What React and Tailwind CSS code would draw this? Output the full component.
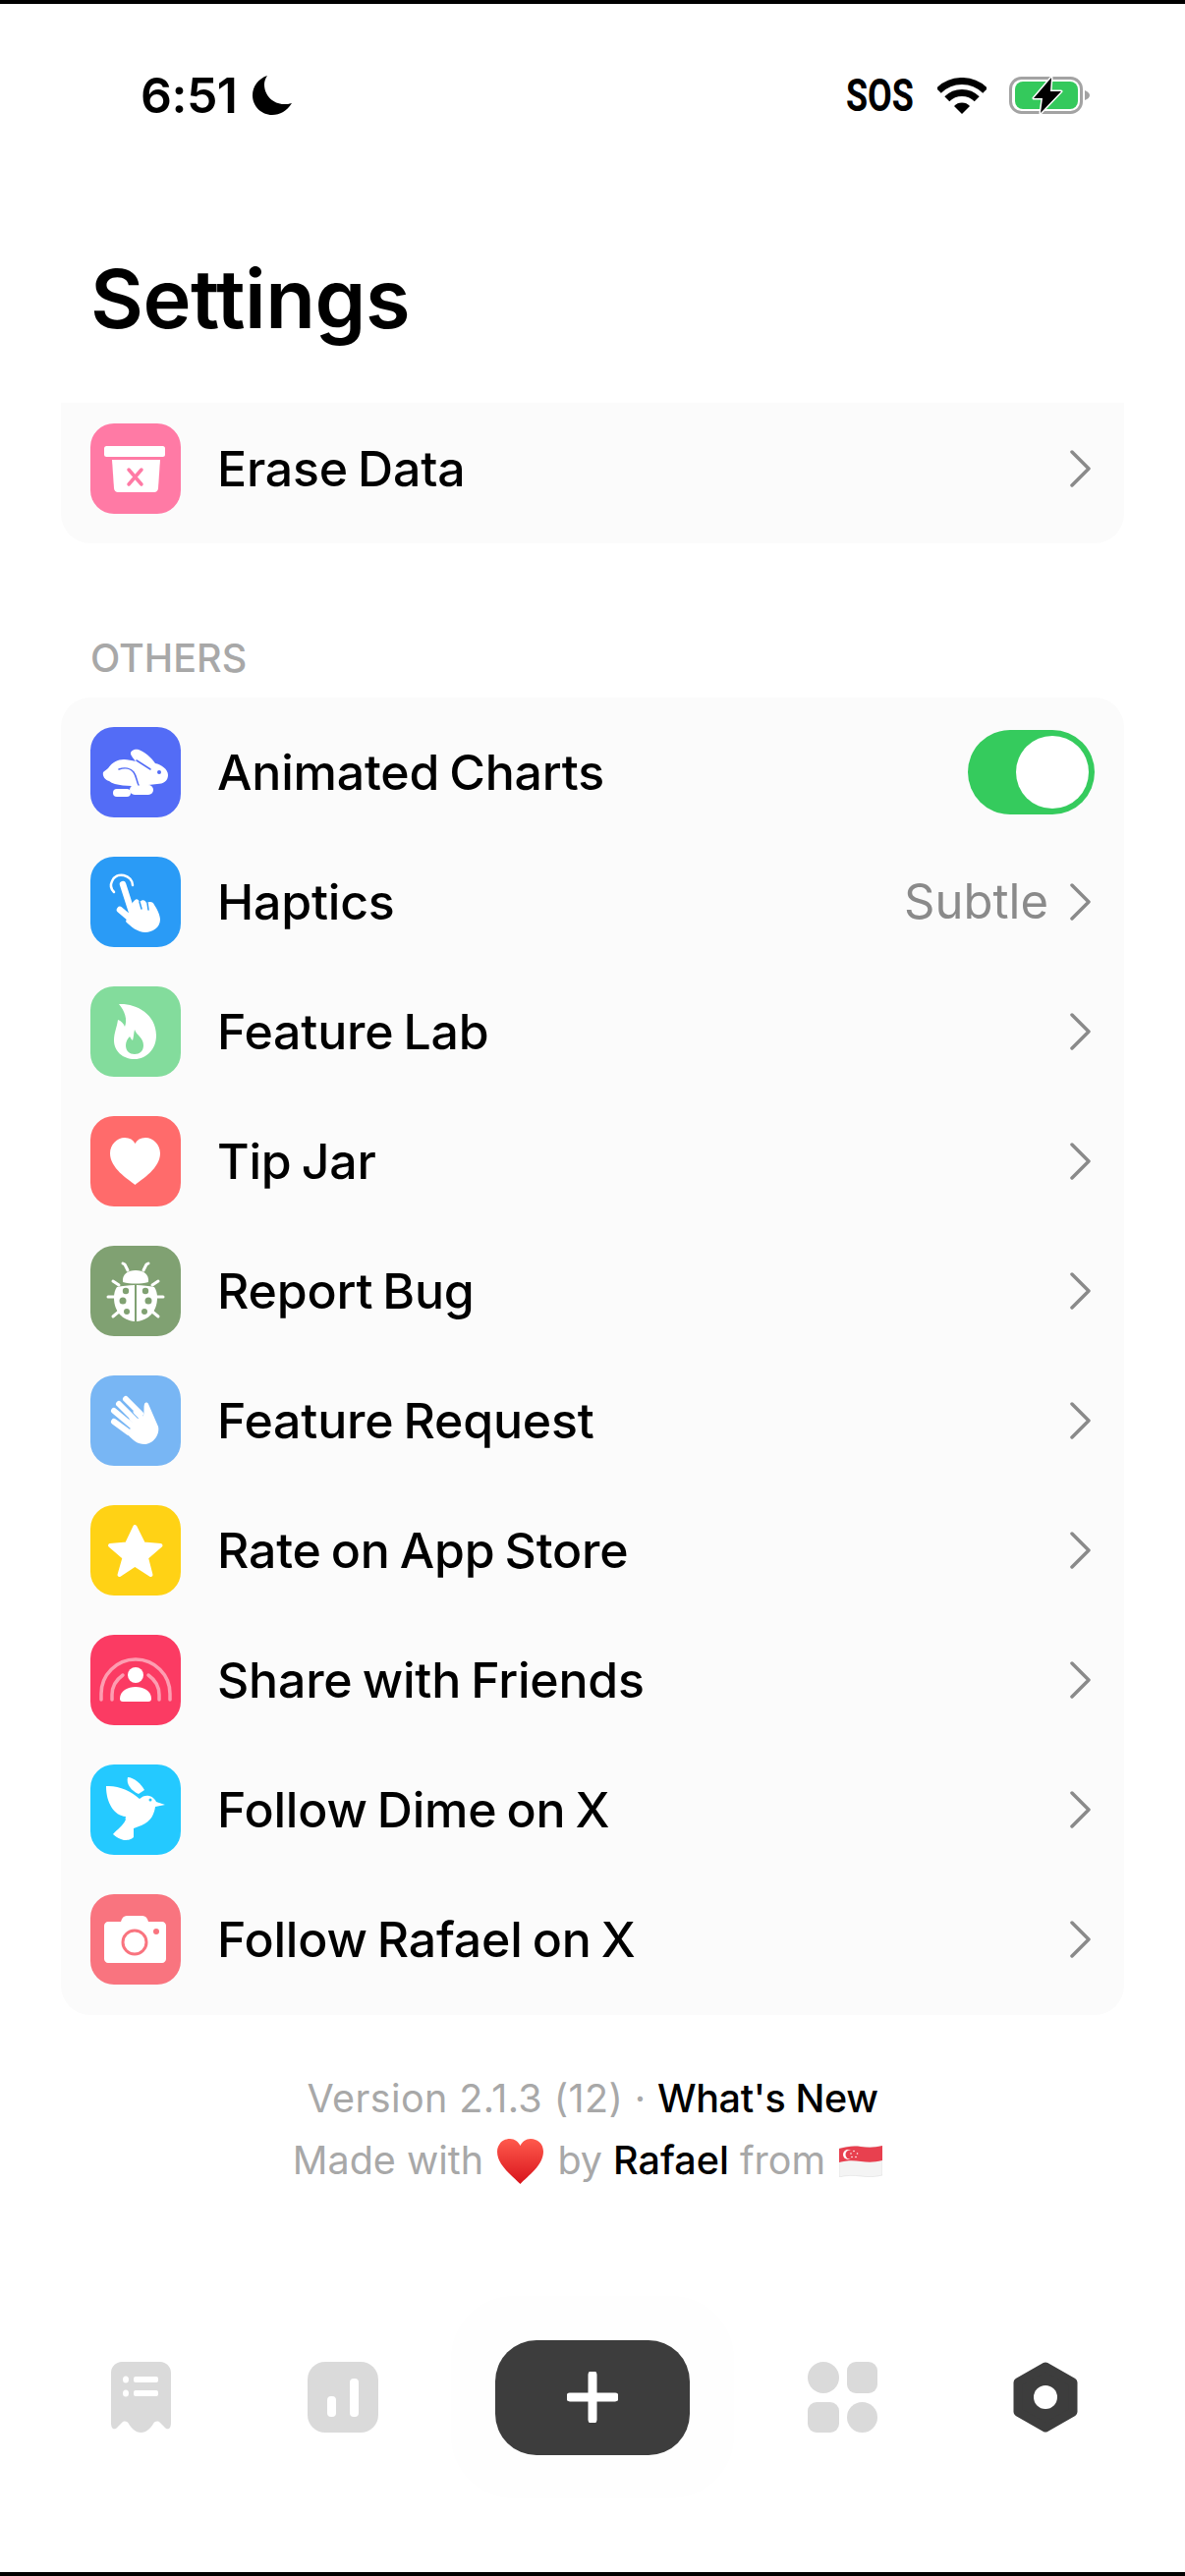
import React from "react";

const G = ({ children }) => (
  <svg viewBox="0 0 92 92" className="w-[92px] h-[92px]" fill="#fff">
    {children}
  </svg>
);

// Row icons, all drawn on the 92x92 tile
const EraseIcon = () => (
  <G>
    <rect x="14" y="23" width="62" height="11" rx="2.5" />
    <path d="M22 37h49l-2 29c-.2 2.500-2 4-4 4H28c-2 0-3.800-1.500-4-4z" />
    <path d="M39 47l13 15M52 47l-13 15" stroke="#ff7aa5" strokeWidth="3.500" strokeLinecap="round" fill="none" />
  </G>
);

const RabbitIcon = () => (
  <G>
    <path d="M13 46C15 44 17 43 18 42C22 36 28 33 34 33C38 33 42 34 46 35C44 32 41 29 41 27C41 24 45 22 49 23C55 25 62 31 66 37C72 38 79 43 79 49C79 55 74 58 68 58L50 60C40 60 25 60 19 55C15 54 12 50 13 46Z" />
    <rect x="23" y="63" width="18" height="8" rx="4" />
    <rect x="40" y="59" width="24" height="10" rx="5" />
    <circle cx="70" cy="46" r="2" fill="#536cf6" />
    <path d="M29 43c6-2 12-1 15 3 3 4 3 9 5 13M47 34l14 9" stroke="#536cf6" strokeWidth="1.500" fill="none" strokeLinecap="round" />
  </G>
);

const HapticIcon = () => (
  <G>
    <path d="M24 36c-3-3-4-7-2-11 2-5 7-7 12-6 5 1 9 5 9 10" stroke="#fff" strokeWidth="2.500" fill="none" strokeLinecap="round" />
    <path d="M33 28l9 28M30 54l13 11" stroke="#fff" strokeWidth="6.500" strokeLinecap="round" fill="none" />
    <path d="M42 48c4-6 6-6 8-2 3-3 6-2 7 1 4-2 7-1 8 2 3 4 6 11 6 15 0 8-8 13-15 13-8 0-15-6-20-11z" />
    <path d="M50 46l2 7M58 47l1 7" stroke="#2a9bf6" strokeWidth="1.500" strokeLinecap="round" />
  </G>
);

const FlameIcon = () => (
  <G>
    <path d="M29 18C45 17 67 27 67 50c0 14-10 24-22 24-12 0-21-8-21-19 0-8 3-13 4-21 3 1 6 4 7 7 3-7 0-16-6-23z" />
    <path d="M45 44c2 6 9 8 9 16 0 6-4 9-9 9s-9-3-9-9c0-4 2-7 4-9 1 2 2 3 3 4 1-3 1-7 2-11z" fill="#83dc9c" />
  </G>
);

const HeartIcon = () => (
  <G>
    <path d="M45.500 70C38 64 20 53 20 38c0-9 7-16 15-16 5 0 8.500 2 10.500 6 2-4 5.500-6 10.500-6 8 0 15 7 15 16 0 15-18 26-25.500 32z" />
  </G>
);

const BugIcon = () => (
  <G>
    <path d="M33 37c-1-8 5-12 13-12s14 4 13 12c-8 2-18 2-26 0z" />
    <path d="M38 25l-3-6M54 25l3-6M35 19l-2-1M57 19l2-1" stroke="#fff" strokeWidth="3" strokeLinecap="round" />
    <path d="M45 40v37c-12-1-21-10-21-24 0-5 1-8 3-11 5-1 12-2 18-2zM47 40v37c12-1 21-10 21-24 0-5-1-8-3-11-5-1-12-2-18-2z" />
    <path d="M18 52h8M66 52h8M23 36l6 4M69 36l-6 4M23 72l6-5M69 72l-6-5" stroke="#fff" strokeWidth="3" strokeLinecap="round" />
    <g fill="#80a172">
      <circle cx="36" cy="46" r="3.200" />
      <circle cx="33" cy="56" r="3.500" />
      <circle cx="37" cy="67" r="3" />
      <circle cx="56" cy="46" r="3.200" />
      <circle cx="59" cy="56" r="3.500" />
      <circle cx="55" cy="67" r="3" />
    </g>
  </G>
);

const WaveIcon = () => (
  <G>
    <path d="M36 24l15 15M29 29l17 17M24 36l18 15M24 47l15 11" stroke="#fff" strokeWidth="6" strokeLinecap="round" />
    <path d="M44 46l10-5c1-4 0-9 1-12 1-2 3-2 4 0l10 23c2 8-5 18-14 18-7 0-12-4-17-10z" />
    <path d="M46 37l5 5M42 44l4 4" stroke="#fff" strokeWidth="5" strokeLinecap="round" />
  </G>
);

const StarIcon = () => (
  <G>
    <polygon
      points="45.300,22 54,39.500 71.500,41 57,53.500 61.500,71 45.300,60.500 29.500,71 34.500,53.500 20,41 37,39.500"
      stroke="#fff"
      strokeWidth="4"
      strokeLinejoin="round"
    />
  </G>
);

const ShareIcon = () => (
  <G>
    <path d="M11 66v-6a35 35 0 0 1 70 0v6" stroke="#fff" strokeOpacity=".5" strokeWidth="3.500" strokeLinecap="round" fill="none" />
    <path d="M22 66v-5c0-8 4-15 11-20M70 66v-5c0-8-4-15-11-20" stroke="#fff" strokeOpacity=".5" strokeWidth="3.500" strokeLinecap="round" fill="none" />
    <circle cx="46" cy="41" r="8" />
    <path d="M30 65c0-8 8-12 16-12s16 4 16 12c0 2-1 3-3 3H33c-2 0-3-1-3-3z" />
  </G>
);

const BirdIcon = () => (
  <G>
    <path d="M38 13c6 0 14 7 17 13l-6 4c-7-3-13-10-11-17z" />
    <path d="M16 22c12-1 26 5 34 13 3-3 7-4 10-3 4 1 6 4 7 6l9 3-10 2c-1 7-4 15-14 19-3 1-5 2-8 3v9c-3 3-7 3-10 3-4-1-8-3-11-6 4-5 10-8 13-15-1-1-0-2 0-3-12-1-20-14-20-31z" />
    <circle cx="61" cy="36" r="1.500" fill="#24c9ff" />
  </G>
);

const CameraIcon = () => (
  <G>
    <path d="M18 28h13c1-4 3-6 6-6h16c3 0 5 2 6 6h14c2 0 4 2 4 4v34c0 2-2 4-4 4H18c-2 0-4-2-4-4V32c0-2 2-4 4-4z" />
    <circle cx="45" cy="49" r="12" fill="none" stroke="#f9747f" strokeWidth="3" />
    <circle cx="67" cy="38" r="3" fill="#f9747f" />
  </G>
);

const Chevron = () => (
  <svg viewBox="0 0 21 38" className="w-[21px] h-[38px]" fill="none">
    <path d="M2 2l17 17L2 36" stroke="#8a8a8a" strokeWidth="3.500" strokeLinecap="round" strokeLinejoin="round" />
  </svg>
);

const Toggle = () => (
  <div className="w-[129px] h-[86px] rounded-full bg-[#35cb5d] flex items-center justify-end pr-[6px]">
    <div className="w-[74px] h-[74px] rounded-full bg-white" />
  </div>
);

const Row = ({ icon, color, label, value, toggle }) => (
  <div className="flex items-center h-[92px]">
    <div className={`w-[92px] h-[92px] rounded-[24px] ${color}`}>{icon}</div>
    <span className="ml-[37px] flex-1 text-[50px] font-medium tracking-[-0.2px] [word-spacing:-3px] text-black">{label}</span>
    {toggle ? (
      <Toggle />
    ) : (
      <div className="flex items-center pr-[4px]">
        {value && <span className="text-[49px] text-[#8a8a8a] mr-[22px]">{value}</span>}
        <Chevron />
      </div>
    )}
  </div>
);

const rows = [
  { label: "Animated Charts", color: "bg-[#536cf6]", icon: <RabbitIcon />, toggle: true },
  { label: "Haptics", color: "bg-[#2a9bf6]", icon: <HapticIcon />, value: "Subtle" },
  { label: "Feature Lab", color: "bg-[#83dc9c]", icon: <FlameIcon /> },
  { label: "Tip Jar", color: "bg-[#ff6b6b]", icon: <HeartIcon /> },
  { label: "Report Bug", color: "bg-[#80a172]", icon: <BugIcon /> },
  { label: "Feature Request", color: "bg-[#78b6f4]", icon: <WaveIcon /> },
  { label: "Rate on App Store", color: "bg-[#ffd215]", icon: <StarIcon /> },
  { label: "Share with Friends", color: "bg-[#fb3b63]", icon: <ShareIcon /> },
  { label: "Follow Dime on X", color: "bg-[#24c9ff]", icon: <BirdIcon /> },
  { label: "Follow Rafael on X", color: "bg-[#f9747f]", icon: <CameraIcon /> },
];

const StatusBar = () => (
  <div className="h-[250px] flex items-start justify-between pl-[143px] pr-[97px] pt-[71px]">
    <div className="flex items-center h-[44px]">
      <span className="text-[50px] font-semibold tracking-[-0.5px] text-black leading-none">6:51</span>
      <svg viewBox="0 0 40 40" className="w-[40px] h-[40px] ml-[15px]" fill="#000">
        <path d="M15 0C6 3 0 11 0 20c0 11 9 20 20 20 8 0 15-4 20-12-3 1-5 1-8 1C21 29 12 20 12 9c0-3 1-6 3-9z" />
      </svg>
    </div>
    <div className="flex items-center h-[44px]">
      <div className="w-[66px] h-[44px] flex items-center">
        <span className="font-['Roboto'] text-[46px] font-bold leading-none text-black [transform:scaleX(.78)] origin-left">SOS</span>
      </div>
      <svg viewBox="0 0 50 37" className="w-[50px] h-[37px] ml-[27px]" fill="none" stroke="#000" strokeWidth="7">
        <path d="M1.300 13.300a33.500 33.500 0 0 1 47.400 0" />
        <path d="M9.800 21.800a21.500 21.500 0 0 1 30.400 0" />
        <path d="M25 37l-8-8a11 11 0 0 1 16 0z" fill="#000" stroke="none" />
      </svg>
      <svg viewBox="0 0 82 38" className="w-[82px] h-[38px] ml-[23px]" fill="none">
        <rect x="1.500" y="1.500" width="72" height="35" rx="11" stroke="#a3a3a3" strokeWidth="3" />
        <rect x="6" y="5" width="64" height="28" rx="8" fill="#34c95c" />
        <path d="M77 14c3 1 5 3 5 5s-2 4-5 5z" fill="#a3a3a3" />
        <path d="M43 1L25 22h9l-2 15 21-22H42z" fill="#000" stroke="#fff" strokeWidth="3" strokeLinejoin="round" paintOrder="stroke" />
      </svg>
    </div>
  </div>
);

const Footer = () => (
  <div className="mt-[54px] flex flex-col items-center text-[39.5px] text-[#a8a8a8]">
    <div className="h-[63px] flex items-center tracking-[0.4px]">
      Version 2.1.3 (12)&nbsp;·&nbsp;<span className="font-medium tracking-[-0.4px] text-black">What's New</span>
    </div>
    <div className="h-[63px] flex items-center whitespace-pre pr-[10px]">
      <span>Made with </span>
      <svg viewBox="0 0 47 46" className="w-[47px] h-[46px] mx-[3px]">
        <defs>
          <linearGradient id="heart" x1="0" y1="0" x2="0" y2="1">
            <stop offset="0" stopColor="#ff5a4d" />
            <stop offset="1" stopColor="#d8141c" />
          </linearGradient>
        </defs>
        <path d="M23.500 46C16 38 0 27 0 13 0 5 6 0 13 0c5 0 8.500 3 10.500 7C25.500 3 29 0 34 0c7 0 13 5 13 13 0 14-16 25-23.500 33z" fill="url(#heart)" />
      </svg>
      <span> by </span>
      <span className="font-medium text-black">Rafael</span>
      <span> from </span>
      <svg viewBox="0 0 44 32" className="w-[44px] h-[32px] ml-[3px]">
        <path d="M0 3c8-2 14-3 22-2s14 1 22-1v30c-8 2-14 2-22 1S8 30 0 32z" fill="#f4f4f4" stroke="#d9d9d9" strokeWidth=".5" />
        <path d="M0 3c8-2 14-3 22-2s14 1 22-1v15c-8 2-14 2-22 1S8 15 0 17z" fill="#e8404f" />
        <circle cx="9" cy="9" r="5" fill="#fff" />
        <circle cx="11" cy="9" r="4.500" fill="#e8404f" />
        <g fill="#fff">
          <circle cx="15" cy="5.500" r=".8" />
          <circle cx="18.500" cy="8" r=".8" />
          <circle cx="17" cy="11.500" r=".8" />
          <circle cx="13" cy="11.500" r=".8" />
          <circle cx="12" cy="8" r=".8" />
        </g>
      </svg>
    </div>
  </div>
);

const BottomNav = () => (
  <div className="grid grid-cols-[206px_206px_302px_207px_206px] items-center px-[40px]">
    <div className="flex justify-center">
      <svg viewBox="0 0 61 72" className="w-[61px] h-[72px]" fill="#dadada">
        <path d="M0 11C0 5 5 0 11 0H50C56 0 61 5 61 11V62C61 69 57 70 54 66L50 62C48 60 45 60 43 63C41 67 36 72 30.500 72C25 72 20 67 18 63C16 60 13 60 11 62L7 66C4 70 0 69 0 62Z" />
        <g fill="#fff">
          <ellipse cx="15" cy="18" rx="3" ry="3.500" />
          <rect x="23" y="15" width="25" height="6" rx="2" />
          <ellipse cx="15" cy="32" rx="3" ry="3.500" />
          <rect x="23" y="29" width="25" height="6" rx="2" />
        </g>
      </svg>
    </div>
    <div className="flex justify-center">
      <svg viewBox="0 0 72 72" className="w-[72px] h-[72px]">
        <rect width="72" height="72" rx="18" fill="#dadada" />
        <rect x="20" y="35" width="9" height="21" rx="4" fill="#fff" />
        <rect x="43" y="17" width="9" height="39" rx="4" fill="#fff" />
      </svg>
    </div>
    <div className="flex justify-center">
      <div className="w-[288px] h-[206px] rounded-[64px] bg-[#fefefe] flex items-center justify-center">
        <div className="w-[198px] h-[117px] rounded-[42px] bg-[#3d3d3d] flex items-center justify-center">
          <svg viewBox="0 0 52 52" className="w-[52px] h-[52px]" fill="none">
            <path d="M26 3v46M3 26h46" stroke="#fff" strokeWidth="9" strokeLinecap="round" />
          </svg>
        </div>
      </div>
    </div>
    <div className="flex justify-center">
      <div className="grid grid-cols-2 gap-[9px] w-[72px]">
        <div className="w-[32px] h-[32px] rounded-full bg-[#dadada]" />
        <div className="w-[31px] h-[32px] rounded-[9px] bg-[#dadada]" />
        <div className="w-[32px] h-[31px] rounded-[9px] bg-[#dadada]" />
        <div className="w-[31px] h-[31px] rounded-full bg-[#dadada]" />
      </div>
    </div>
    <div className="flex justify-center">
      <svg viewBox="0 0 66 72" className="w-[66px] h-[72px]">
        <polygon points="33,5 61,21 61,51 33,67 5,51 5,21" fill="#3d3d3d" stroke="#3d3d3d" strokeWidth="9" strokeLinejoin="round" />
        <circle cx="33" cy="36" r="12" fill="#fff" />
      </svg>
    </div>
  </div>
);

export default function App() {
  return (
    <div className="w-[1206px] h-[2622px] bg-white flex flex-col font-['Inter',sans-serif] border-y-4 border-black overflow-hidden">
      <StatusBar />
      <h1 className="pl-[92px] h-[100px] flex items-center text-[83px] font-semibold tracking-[-0.5px] text-black">Settings</h1>

      <div className="mt-[56px] mx-[62px] rounded-b-[30px] bg-[#fbfbfb] pl-[30px] pr-[30px] pt-[21px] pb-[30px]">
        <Row label="Erase Data" color="bg-[#ff7aa5]" icon={<EraseIcon />} />
      </div>

      <div className="mt-[98px] pl-[92px] h-[40px] flex items-center text-[39.5px] font-medium text-[#a8a8a8]">OTHERS</div>

      <div className="mt-[19px] mx-[62px] rounded-[30px] bg-[#fbfbfb] pl-[30px] pr-[30px] pt-[30px] pb-[31px] flex flex-col gap-[40px]">
        {rows.map((row) => (
          <Row key={row.label} {...row} />
        ))}
      </div>

      <Footer />
      <div className="mt-auto pb-[75px]">
        <BottomNav />
      </div>
    </div>
  );
}
